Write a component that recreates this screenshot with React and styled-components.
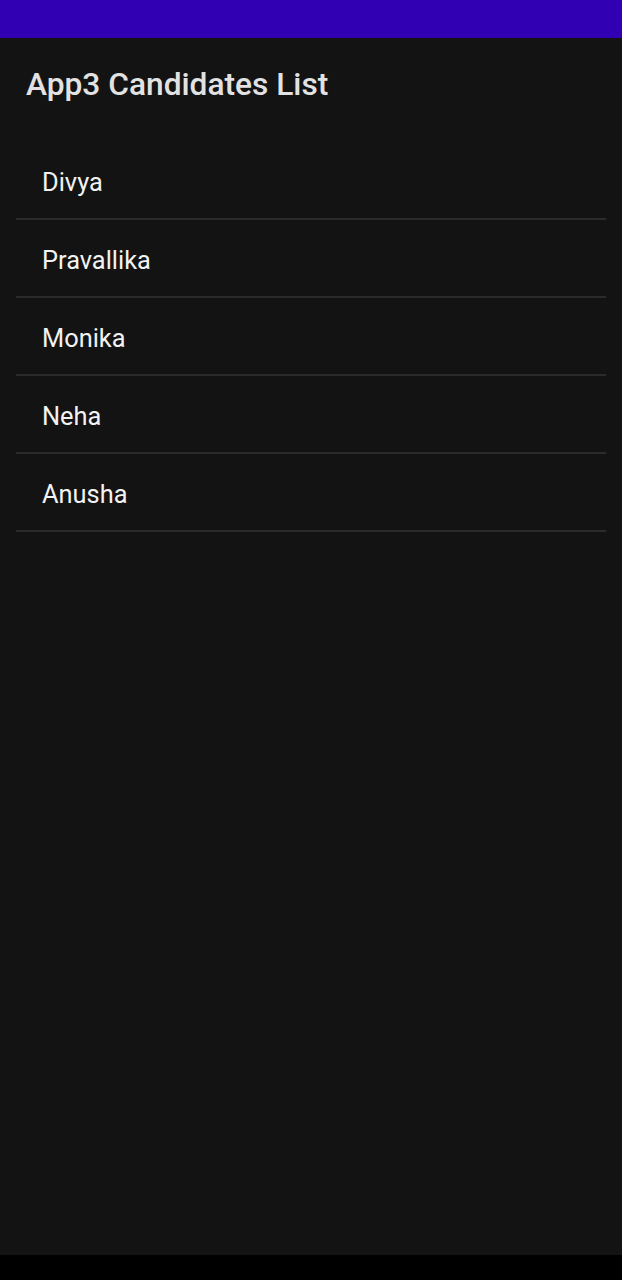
import React from "react";
import styled, { createGlobalStyle } from "styled-components";

const Global = createGlobalStyle`
  html, body { margin: 0; padding: 0; background: #000; }
  body { font-family: Roboto, "Noto Sans", sans-serif; }
`;

const Screen = styled.div`
  width: 622px;
  height: 1280px;
  display: flex;
  flex-direction: column;
  background: #000;
`;

const StatusBar = styled.div`
  height: 38px;
  background: #3100b3;
  flex-shrink: 0;
`;

const Body = styled.div`
  height: 1217px;
  background: #131313;
  display: flex;
  flex-direction: column;
`;

const Title = styled.h1`
  margin: 0;
  padding: 28px 0 0 26px;
  height: 38px;
  font-family: Roboto, sans-serif;
  font-weight: 500;
  font-size: 31.7px;
  line-height: 38px;
  color: #e2e2e2;
  box-sizing: content-box;
`;

const List = styled.ul`
  list-style: none;
  margin: 38px 16px 0;
  padding: 0;
`;

const Row = styled.li`
  display: flex;
  align-items: center;
  padding: 4px 0 0 26px;
  height: 72px;
  box-sizing: content-box;
  border-bottom: 2px solid #2b2b2b;
  font-family: Roboto, sans-serif;
  font-size: 25.4px;
  color: #f2f2f2;
`;

const names = ["Divya", "Pravallika", "Monika", "Neha", "Anusha"];

export default function App() {
  return (
    <>
      <Global />
      <Screen>
        <StatusBar />
        <Body>
          <Title>App3 Candidates List</Title>
          <List>
            {names.map((n) => (
              <Row key={n}>{n}</Row>
            ))}
          </List>
        </Body>
      </Screen>
    </>
  );
}
